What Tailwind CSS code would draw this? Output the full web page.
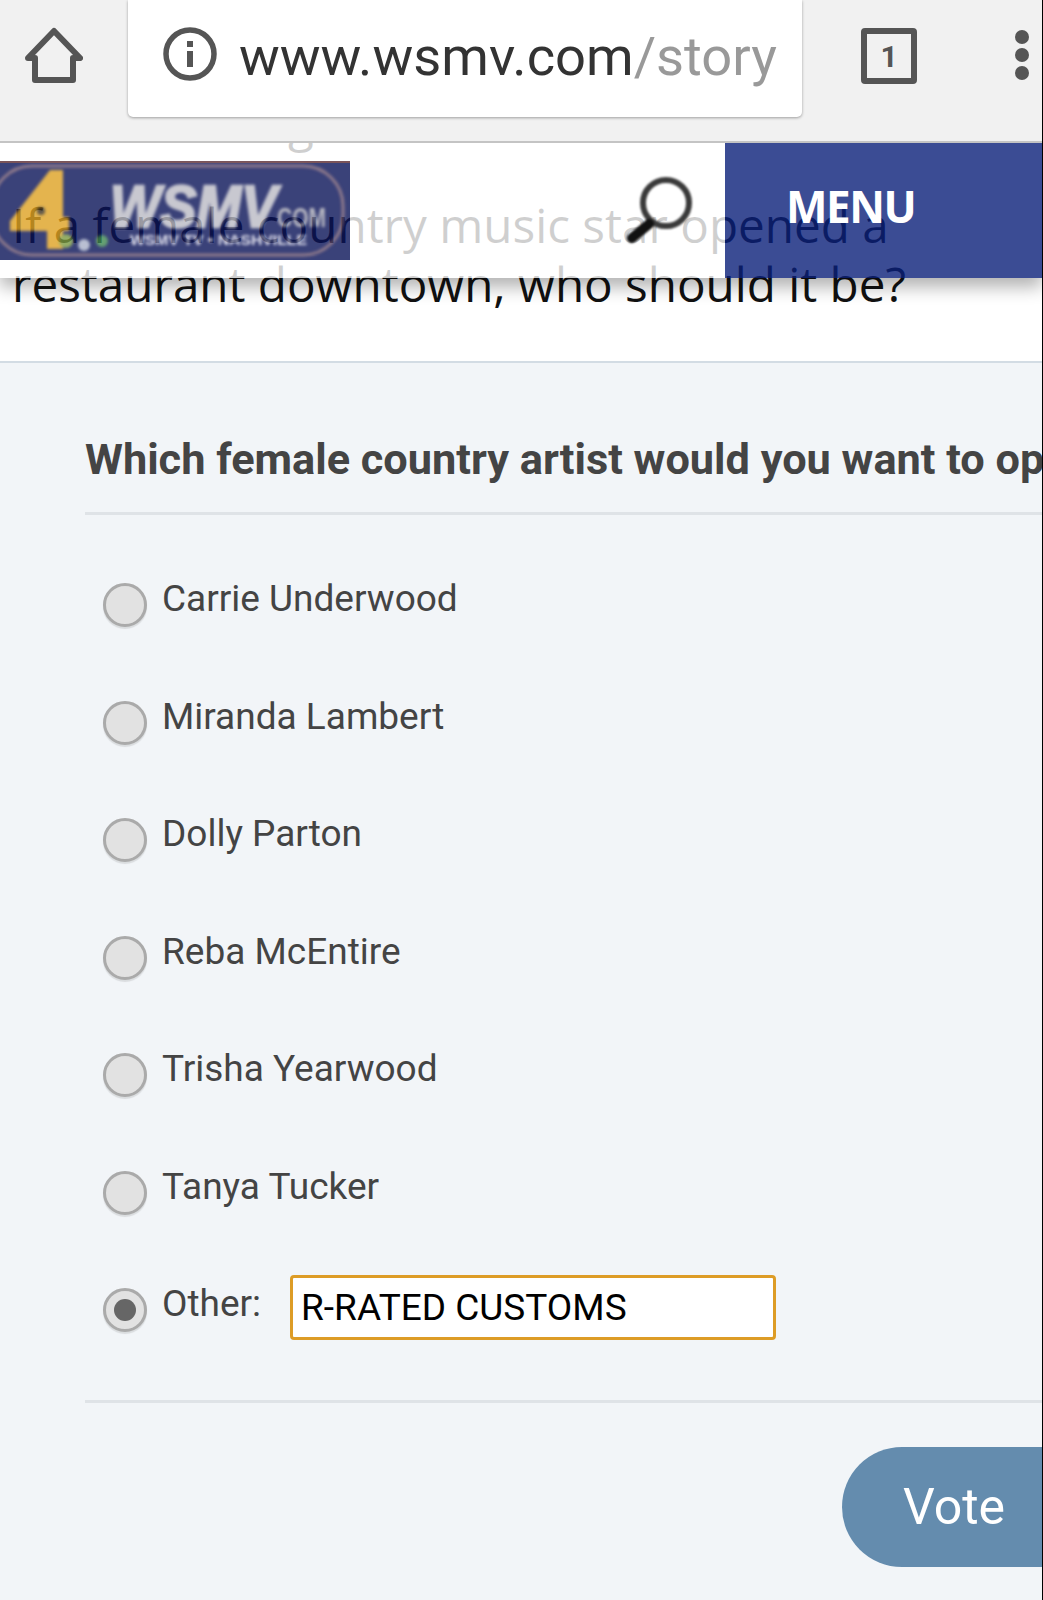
<!doctype html>
<html>
<head>
<meta charset="utf-8">
<script src="https://cdn.jsdelivr.net/npm/@tailwindcss/browser@4"></script>
<title>WSMV poll</title>
</head>
<body class="bg-black">
<div class="relative w-[1042px] h-[1600px] overflow-hidden bg-[#f2f5f8] font-['Roboto',sans-serif]">

  <!-- browser toolbar -->
  <div class="relative z-20 h-[143px] bg-[#f1f1f1] border-b-2 border-[#c4c4c4] flex items-start">
    <div class="w-[128px] shrink-0 pl-[25px] pt-[27px]">
      <svg class="w-[58px] h-[58px]" viewBox="0 0 58 58" fill="none" stroke="#555" stroke-width="6" stroke-linejoin="round" stroke-linecap="round"><path d="M3 31 29 4l26 27h-7v22H10V31z"/></svg>
    </div>
    <div class="w-[674px] h-[117px] bg-white rounded-b-[5px] shadow-[0_1px_3px_rgba(0,0,0,.35)] flex items-center pl-[35px] pb-[4px]">
      <svg class="w-[54px] h-[54px] shrink-0 mb-[6px]" viewBox="0 0 54 54" fill="none"><circle cx="27" cy="27" r="24" stroke="#555" stroke-width="5.5"/><rect x="24" y="14" width="6" height="6" fill="#555"/><rect x="24" y="24" width="6" height="16" fill="#555"/></svg>
      <span class="ml-[22px] mt-[1px] text-[54.3px] leading-none text-[#333] whitespace-nowrap">www.wsmv.com<span class="text-[#999]">/story</span></span>
    </div>
    <div class="w-[240px] shrink-0 flex items-start">
      <div class="ml-[59px] mt-[28px] w-[56px] h-[56px] border-[6px] border-[#555] rounded-[4px] flex items-center justify-center text-[30px] font-bold text-[#555]">1</div>
      <div class="ml-[98px] mt-[30px] flex flex-col gap-[4px]">
        <span class="w-[14px] h-[14px] rounded-full bg-[#555]"></span>
        <span class="w-[14px] h-[14px] rounded-full bg-[#555]"></span>
        <span class="w-[14px] h-[14px] rounded-full bg-[#555]"></span>
      </div>
    </div>
  </div>

  <!-- site header, sits over the scrolled article -->
  <div class="absolute z-10 top-[142px] left-0 w-full h-[136px] flex shadow-[0_9px_16px_rgba(0,0,0,.3)]">
    <div class="w-[350px] shrink-0 flex flex-col">
      <div class="h-[19px] bg-white/80"></div>
      <svg class="block w-[350px] h-[99px] opacity-80" viewBox="0 0 350 99">
        <rect width="350" height="99" fill="#0a1358"/>
        <rect x="0" width="350" height="2" fill="#5a2a30"/>
        <g class="blur-[1.4px]">
          <rect x="-8" y="5" width="351" height="89" rx="40" fill="none" stroke="#745a6f" stroke-width="3"/>
          <path d="M10 60 50 9h13v47h6v14h-6v18H47V70H10z" fill="#dea222"/>
          <circle cx="41" cy="50" r="4" fill="#3a3020"/>
          <text x="110" y="66" font-family="Liberation Sans" font-size="60" font-weight="700" font-style="italic" textLength="167" lengthAdjust="spacingAndGlyphs" fill="#bbbbc5" stroke="#bbbbc5" stroke-width="2.5">WSMV</text>
          <text x="277" y="66" font-family="Liberation Sans" font-size="28" font-weight="700" textLength="49" lengthAdjust="spacingAndGlyphs" fill="#a9a9b5">COM</text>
          <text x="130" y="84" font-family="Liberation Sans" font-size="14" font-weight="700" textLength="177" lengthAdjust="spacingAndGlyphs" fill="#d8d8e8">WSMV TV • NASHVILLE</text>
          <circle cx="66" cy="80" r="7" fill="#7a9a40"/>
          <circle cx="84" cy="84" r="6" fill="#a8b0c8"/>
          <circle cx="102" cy="80" r="6" fill="#3f8a50"/>
        </g>
      </svg>
      <div class="h-[18px] bg-white/80"></div>
    </div>
    <div class="relative w-[375px] shrink-0 h-full bg-white/80">
      <svg class="absolute left-[271px] top-[28px] w-[74px] h-[78px] blur-[0.8px]" viewBox="0 0 74 78" fill="none">
        <circle cx="45" cy="33" r="23" stroke="#3a3a3a" stroke-width="6"/>
        <path d="M28 54 11 68" stroke="#111" stroke-width="10" stroke-linecap="round"/>
      </svg>
    </div>
    <div class="flex-1 h-full bg-[#0a1f79]/80 pl-[61px] pt-[42px]">
      <span class="font-['Open_Sans',sans-serif] font-bold text-[44px] tracking-[-1.5px] leading-none text-white">MENU</span>
    </div>
  </div>

  <!-- article text -->
  <div class="relative h-[220px] bg-white border-b-2 border-[#d3dce4] pl-[12px] pt-[52px] font-['Open_Sans',sans-serif] text-[47.6px] leading-[59px] text-[#111] whitespace-nowrap">
    <span class="absolute left-[288px] top-[-49px]">g</span>
    If a female country music star opened a<br>restaurant downtown, who should it be?
  </div>

  <!-- poll -->
  <div class="pl-[85px]">
    <h2 class="pt-[73px] pb-[28px] border-b-[3px] border-[#dfe3e7] text-[43.3px] leading-[48px] font-bold text-[#444] whitespace-nowrap overflow-hidden">Which female country artist would you want to open</h2>

    <div class="pt-[33px] pl-[18px] pb-[29px] border-b-[3px] border-[#dfe3e7] text-[37px] leading-[42px] text-[#444]">
      <div class="h-[117.5px] flex items-start pt-[30px] gap-[15px]">
        <span class="mt-[5px] w-[44px] h-[44px] shrink-0 rounded-full bg-[#e2e2e2] border-[3px] border-[#aaa] shadow-[0_2px_1px_rgba(0,0,0,.1)]"></span>
        <span>Carrie Underwood</span>
      </div>
      <div class="h-[117.5px] flex items-start pt-[30px] gap-[15px]">
        <span class="mt-[5px] w-[44px] h-[44px] shrink-0 rounded-full bg-[#e2e2e2] border-[3px] border-[#aaa] shadow-[0_2px_1px_rgba(0,0,0,.1)]"></span>
        <span>Miranda Lambert</span>
      </div>
      <div class="h-[117.5px] flex items-start pt-[30px] gap-[15px]">
        <span class="mt-[5px] w-[44px] h-[44px] shrink-0 rounded-full bg-[#e2e2e2] border-[3px] border-[#aaa] shadow-[0_2px_1px_rgba(0,0,0,.1)]"></span>
        <span>Dolly Parton</span>
      </div>
      <div class="h-[117.5px] flex items-start pt-[30px] gap-[15px]">
        <span class="mt-[5px] w-[44px] h-[44px] shrink-0 rounded-full bg-[#e2e2e2] border-[3px] border-[#aaa] shadow-[0_2px_1px_rgba(0,0,0,.1)]"></span>
        <span>Reba McEntire</span>
      </div>
      <div class="h-[117.5px] flex items-start pt-[30px] gap-[15px]">
        <span class="mt-[5px] w-[44px] h-[44px] shrink-0 rounded-full bg-[#e2e2e2] border-[3px] border-[#aaa] shadow-[0_2px_1px_rgba(0,0,0,.1)]"></span>
        <span>Trisha Yearwood</span>
      </div>
      <div class="h-[117.5px] flex items-start pt-[30px] gap-[15px]">
        <span class="mt-[5px] w-[44px] h-[44px] shrink-0 rounded-full bg-[#e2e2e2] border-[3px] border-[#aaa] shadow-[0_2px_1px_rgba(0,0,0,.1)]"></span>
        <span>Tanya Tucker</span>
      </div>
      <div class="h-[117.5px] flex items-start pt-[30px] gap-[15px]">
        <span class="mt-[5px] w-[44px] h-[44px] shrink-0 rounded-full bg-[#e2e2e2] border-[3px] border-[#aaa] shadow-[0_2px_1px_rgba(0,0,0,.1)] flex items-center justify-center"><span class="w-[22px] h-[22px] rounded-full bg-[#666]"></span></span>
        <span>Other:</span>
        <div class="ml-[14px] -mt-[8px] w-[486px] h-[65px] bg-white border-[3px] border-[#dd9c26] rounded-[4px] flex items-center pl-[8px] text-black">R-RATED CUSTOMS</div>
      </div>
    </div>

    <div class="flex justify-end pt-[44px]">
      <div class="w-[200px] h-[120px] bg-[#648cae] rounded-l-[60px] text-white text-[50px] flex items-center pl-[61px] pt-[2px]">Vote</div>
    </div>
  </div>
</div>
</body>
</html>
